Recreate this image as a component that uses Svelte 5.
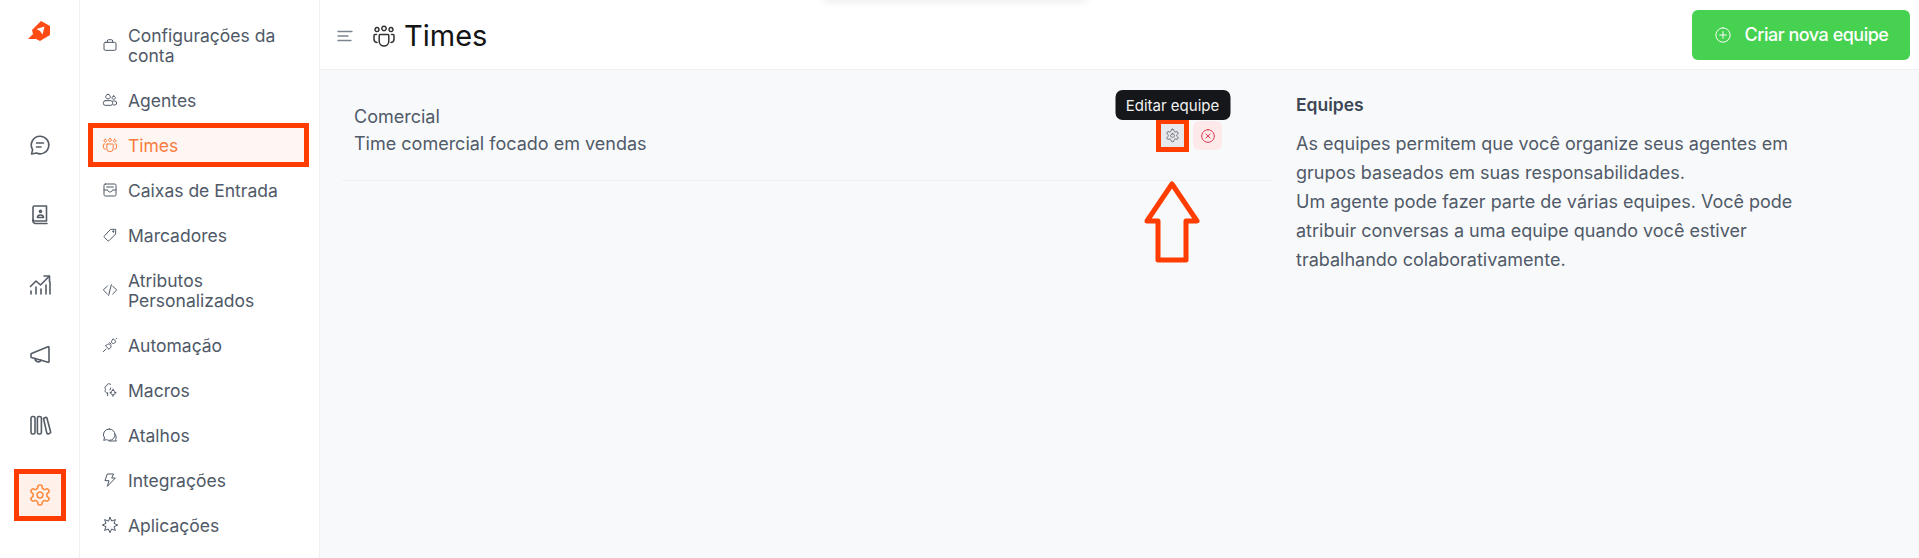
<script lang="ts">
  const icons: Record<string, string[]> = {
    chat: ["M12 3.200a8.800 8.800 0 1 1-3.600 16.800L3.600 21l1-4.400A8.800 8.800 0 0 1 12 3.200z", "M8.500 10h7", "M8.500 14h4.500"],
    contact: ["M6.500 3h12v15h-12A1.500 1.500 0 0 1 5 16.500v-12A1.500 1.500 0 0 1 6.500 3z", "M5 16.500A3 3 0 0 0 7 20.500H19", "M12.500 7.400a1 1 0 1 0 .01 0z", "M9.500 14.500c0-3.400 6-3.400 6 0z"],
    reports: ["M3 21v-3", "M8 21v-7", "M13 21v-5", "M18 21v-9", "M22 21V9", "M2.500 13.500 8 8l4.500 4L21 3.500", "M16 3h5.500v5.500"],
    megaphone: ["M21 4.500v14a.8.8 0 0 1-1 .8L3.500 14.500a.8.8 0 0 1-.5-.8v-2.600a.8.8 0 0 1 .5-.7L20 3.700a.8.8 0 0 1 1 .8z", "M7 15.600c0 3.600 5.200 4.400 6.200 1.400"],
    library: ["M4.600 3.500h.8A1.600 1.600 0 0 1 7 5.100v14.300A1.600 1.600 0 0 1 5.400 21h-.8A1.600 1.600 0 0 1 3 19.400V5.100A1.600 1.600 0 0 1 4.600 3.500z", "M11 3.500h.8a1.600 1.600 0 0 1 1.600 1.600v14.300a1.600 1.600 0 0 1-1.600 1.600H11a1.600 1.600 0 0 1-1.600-1.600V5.100A1.600 1.600 0 0 1 11 3.500z", "M15.500 5.500l1.800-1a1.200 1.200 0 0 1 1.600.5l3.700 13.800a1.200 1.200 0 0 1-.8 1.500l-1.500.6a1.200 1.200 0 0 1-1.500-.8z"],
    gear: ["M12.200 2h-.4a2 2 0 0 0-2 2v.2a2 2 0 0 1-1 1.700l-.4.300a2 2 0 0 1-2 0l-.2-.1a2 2 0 0 0-2.700.7l-.2.400a2 2 0 0 0 .7 2.700l.2.100a2 2 0 0 1 1 1.700v.5a2 2 0 0 1-1 1.800l-.2.100a2 2 0 0 0-.7 2.700l.2.400a2 2 0 0 0 2.700.7l.2-.1a2 2 0 0 1 2 0l.4.300a2 2 0 0 1 1 1.700v.2a2 2 0 0 0 2 2h.4a2 2 0 0 0 2-2v-.2a2 2 0 0 1 1-1.700l.4-.3a2 2 0 0 1 2 0l.2.100a2 2 0 0 0 2.700-.7l.2-.4a2 2 0 0 0-.7-2.700l-.2-.1a2 2 0 0 1-1-1.800v-.5a2 2 0 0 1 1-1.700l.2-.1a2 2 0 0 0 .7-2.700l-.2-.4a2 2 0 0 0-2.700-.7l-.2.100a2 2 0 0 1-2 0l-.4-.3a2 2 0 0 1-1-1.700V4a2 2 0 0 0-2-2z", "M12 9a3 3 0 1 0 .01 0z"],
    briefcase: ["M5 8h14a2 2 0 0 1 2 2v8a2 2 0 0 1-2 2H5a2 2 0 0 1-2-2v-8a2 2 0 0 1 2-2z", "M8 8V6a2 2 0 0 1 2-2h4a2 2 0 0 1 2 2v2"],
    people: ["M9 3.500a3.500 3.500 0 1 0 .01 0z", "M17.500 6a2.500 2.500 0 1 0 .01 0z", "M5 13h8a3 3 0 0 1 3 3v1a3 3 0 0 1-3 3H5a3 3 0 0 1-3-3v-1a3 3 0 0 1 3-3z", "M16.500 13.500H19a3 3 0 0 1 0 6h-2"],
    team: ["M12 2.300a2.200 2.200 0 1 0 .01 0z", "M5 3.500a2 2 0 1 0 .01 0z", "M19 3.500a2 2 0 1 0 .01 0z", "M8 10.500h8a.8.8 0 0 1 .8.8v6a4.800 4.800 0 0 1-9.600 0v-6a.8.8 0 0 1 .8-.8z", "M4.500 10.500H3a1 1 0 0 0-1 1v3.500a3.500 3.500 0 0 0 3 3.500", "M19.500 10.500H21a1 1 0 0 1 1 1v3.500a3.500 3.500 0 0 1-3 3.500"],
    inbox: ["M5 3h14a2 2 0 0 1 2 2v14a2 2 0 0 1-2 2H5a2 2 0 0 1-2-2V5a2 2 0 0 1 2-2z", "M3 12h5.500c0 4 7 4 7 0H21", "M7 7.500h10"],
    tag: ["M13.500 3.500H20.500V10.500L10.500 20.500a1.500 1.500 0 0 1-2 0L3.500 15.500a1.500 1.500 0 0 1 0-2z", "M17 6a1 1 0 1 0 .01 0z"],
    code: ["M8 6l-6 6 6 6", "M16 6l6 6-6 6", "M14 4l-4 16"],
    plug: ["M2 22l4-4", "M5.500 13.500l5 5 2-2c1.400-1.400 1.400-3.600 0-5s-3.600-1.400-5 0z", "M13.500 10.500l-2-2", "M17 3l4 4-2 2c-1.200 1.200-2.800 1.200-4 0s-1.200-2.800 0-4z", "M21 3l1-1"],
    macro: ["M13 3.500C11 1.500 7.500 2.500 7 5.500 4.500 6 3.500 9 5.500 11 3.500 13 5 16.500 8 16.500", "M8.500 16.500v4", "M13 9l-1 3", "M16.500 12.500a3.500 3.500 0 1 0 .01 0z", "M16.500 10.500v2", "M16.500 19.500v2", "M12 16h2", "M19 16h2"],
    bubbles: ["M11 3a8.500 8.500 0 0 1 0 17c-2 0-3-.5-4-1l-4.500 1 1.300-3.500A8.500 8.500 0 0 1 11 3z", "M19 10c3 3 2.500 7 1.500 8.500L21.500 21H11"],
    bolt: ["M8.500 3h9l-3 6H20L8 21.500l2.500-8.500H5z"],
    apps: ["M12 .5L14.500 6 20.100 3.900 18 9.500 23.500 12 18 14.500 20.100 20.100 14.500 18 12 23.500 9.500 18 3.900 20.100 6 14.500 .5 12 6 9.500 3.900 3.900 9.500 6z"],
    plus: ["M12 2.500a9.500 9.500 0 1 0 .01 0z", "M12 7.500v9", "M7.500 12h9"],
    dismiss: ["M12 2.500a9.500 9.500 0 1 0 .01 0z", "M9 9l6 6", "M15 9l-6 6"]
  };

  const railItems = ["chat", "contact", "reports", "megaphone", "library", "gear"];

  const menu = [
    { label: "Configurações da conta", icon: "briefcase" },
    { label: "Agentes", icon: "people" },
    { label: "Times", icon: "team", active: true },
    { label: "Caixas de Entrada", icon: "inbox" },
    { label: "Marcadores", icon: "tag" },
    { label: "Atributos Personalizados", icon: "code" },
    { label: "Automação", icon: "plug" },
    { label: "Macros", icon: "macro" },
    { label: "Atalhos", icon: "bubbles" },
    { label: "Integrações", icon: "bolt" },
    { label: "Aplicações", icon: "apps" }
  ];
</script>

{#snippet icon(name: string, size: number, width = 1.6)}
  <svg class="ico" width={size} height={size} viewBox="0 0 24 24" fill="none" stroke="currentColor" stroke-width={width} stroke-linecap="round" stroke-linejoin="round">
    {#each icons[name] as d}
      <path {d} />
    {/each}
  </svg>
{/snippet}

<div class="app">
  <nav class="rail">
    <svg class="logo" width="23" height="21" viewBox="0 0 23 21">
      <path d="M13 0l9 5v9l-10 6-6-3-2-8z" fill="#ff4a14" />
      <path d="M8.500 8l8-2.500-2 8-2.500-3.500z" fill="#fff" />
      <path d="M5 13l2.500 5H0z" fill="#ff4a14" />
    </svg>
    {#each railItems as item}
      <button class="rail-btn" class:active={item === "gear"}>
        {@render icon(item, 24)}
      </button>
    {/each}
  </nav>

  <aside class="sidebar">
    {#each menu as item}
      <a class="menu-item" class:active={item.active} href="#top">
        {@render icon(item.icon, 16, 1.500)}
        <span>{item.label}</span>
      </a>
    {/each}
  </aside>

  <div class="page">
    <div class="top-shadow"></div>
    <header class="header">
      <svg class="burger" width="16" height="12" viewBox="0 0 16 12" stroke="#7c8490" stroke-width="1.300" stroke-linecap="round">
        <path d="M1 1.500h14M1 6h10M1 10.500h13" />
      </svg>
      <span class="title-icon">{@render icon("team", 24, 1.500)}</span>
      <h1>Times</h1>
      <button class="create">
        {@render icon("plus", 18, 1.300)}
        Criar nova equipe
      </button>
    </header>

    <main class="content">
      <section class="list">
        <div class="row">
          <div class="info">
            <div>Comercial</div>
            <div>Time comercial focado em vendas</div>
          </div>
          <div class="actions">
            <div class="edit-wrap">
              <div class="tooltip">Editar equipe</div>
              <button class="act act-edit">{@render icon("gear", 15, 1.500)}</button>
              <svg class="arrow" width="58" height="84" viewBox="0 0 58 84" fill="none" stroke="#ff3d00" stroke-width="5" stroke-linejoin="round">
                <path d="M29 4L54 41H43V80H15V41H4z" />
              </svg>
            </div>
            <button class="act act-delete">{@render icon("dismiss", 16, 1.500)}</button>
          </div>
        </div>
      </section>

      <section class="help">
        <h2>Equipes</h2>
        <p>
          As equipes permitem que você organize seus agentes em grupos baseados em suas responsabilidades.<br />
          Um agente pode fazer parte de várias equipes. Você pode atribuir conversas a uma equipe quando você estiver trabalhando colaborativamente.
        </p>
      </section>
    </main>
  </div>
</div>

<style>
  :global(body) {
    margin: 0;
    background: #fff;
  }

  .app {
    display: flex;
    height: 558px;
    overflow: hidden;
    font-family: Inter, "Liberation Sans", sans-serif;
    color: #4f5967;
  }

  .ico {
    display: block;
    flex-shrink: 0;
  }

  .rail {
    width: 79px;
    flex-shrink: 0;
    border-right: 1px solid #eff0f2;
    display: flex;
    flex-direction: column;
    align-items: center;
    gap: 26px;
    padding-top: 21px;
    box-sizing: content-box;
  }

  .logo {
    margin-bottom: 55px;
  }

  .rail-btn {
    width: 44px;
    height: 44px;
    display: flex;
    align-items: center;
    justify-content: center;
    border: 0;
    padding: 0;
    background: none;
    color: #555c66;
  }

  .rail-btn.active {
    background: #fff1ea;
    color: #fb8a3f;
    outline: 5px solid #ff3d00;
    outline-offset: -1px;
  }

  .sidebar {
    width: 240px;
    flex-shrink: 0;
    box-sizing: border-box;
    border-right: 1px solid #eff0f2;
    padding: 17px 14px 0 12px;
    display: flex;
    flex-direction: column;
    gap: 9px;
  }

  .menu-item {
    display: flex;
    align-items: center;
    gap: 10px;
    padding: 9px 12px 7px 10px;
    font-size: 17.500px;
    line-height: 20px;
    color: #4f5967;
    text-decoration: none;
  }

  .menu-item .ico {
    margin-top: -2px;
  }

  .menu-item.active {
    background: #fdf6f2;
    color: #fb7c3c;
    outline: 5px solid #ff3d00;
    outline-offset: -1px;
  }

  .page {
    flex: 1;
    min-width: 0;
    position: relative;
    display: flex;
    flex-direction: column;
  }

  .top-shadow {
    position: absolute;
    left: 504px;
    top: -30px;
    width: 262px;
    height: 30px;
    box-shadow: 0 1px 10px rgba(0, 0, 0, 0.09);
  }

  .header {
    height: 69px;
    flex-shrink: 0;
    border-bottom: 1px solid #eff0f2;
    display: flex;
    align-items: center;
    padding: 0 9px 0 17px;
  }

  .burger {
    margin: 2px 19px 0 0;
  }

  .title-icon {
    color: #333;
    margin: 2px 8px 0 0;
  }

  h1 {
    margin: 2px 0 0;
    font-size: 29px;
    font-weight: 400;
    color: #141414;
    flex: 1;
  }

  .create {
    height: 50px;
    width: 218px;
    display: flex;
    align-items: center;
    justify-content: center;
    gap: 13px;
    border: 0;
    border-radius: 6px;
    background: #46d150;
    color: #fff;
    font-family: inherit;
    font-size: 18px;
    font-weight: 500;
    letter-spacing: -0.500px;
  }

  .content {
    flex: 1;
    display: flex;
    gap: 24px;
    background: #f8f9fb;
    padding: 20px 0 0 22px;
  }

  .list {
    width: 930px;
  }

  .row {
    display: flex;
    justify-content: space-between;
    padding: 13px 50px 23px 12px;
    border-bottom: 1px solid #eff0f2;
  }

  .info {
    font-size: 18px;
    line-height: 27px;
    color: #505a68;
  }

  .actions {
    display: flex;
    gap: 6px;
    padding-top: 18px;
  }

  .edit-wrap {
    position: relative;
  }

  .act {
    width: 29px;
    height: 29px;
    display: flex;
    align-items: center;
    justify-content: center;
    border: 0;
    padding: 0;
    border-radius: 6px;
  }

  .act-edit {
    background: #e7e8ec;
    color: #5c6270;
    border-radius: 0;
    outline: 5px solid #ff3d00;
    outline-offset: -3px;
  }

  .act-delete {
    background: #fde8ea;
    color: #e0384f;
  }

  .tooltip {
    position: absolute;
    left: 50%;
    bottom: calc(100% + 1px);
    transform: translateX(-50%);
    width: 115px;
    height: 30px;
    box-sizing: border-box;
    display: flex;
    align-items: center;
    justify-content: center;
    border-radius: 7px;
    background: #15171a;
    color: #f2f2f2;
    font-size: 15px;
    white-space: nowrap;
  }

  .arrow {
    position: absolute;
    left: -15px;
    top: 59px;
  }

  .help {
    width: 510px;
  }

  h2 {
    margin: 5px 0 14px;
    font-size: 17.500px;
    line-height: 20px;
    font-weight: 600;
    color: #3c4654;
  }

  p {
    margin: 0;
    font-size: 18px;
    line-height: 29px;
    color: #505a68;
  }
</style>
